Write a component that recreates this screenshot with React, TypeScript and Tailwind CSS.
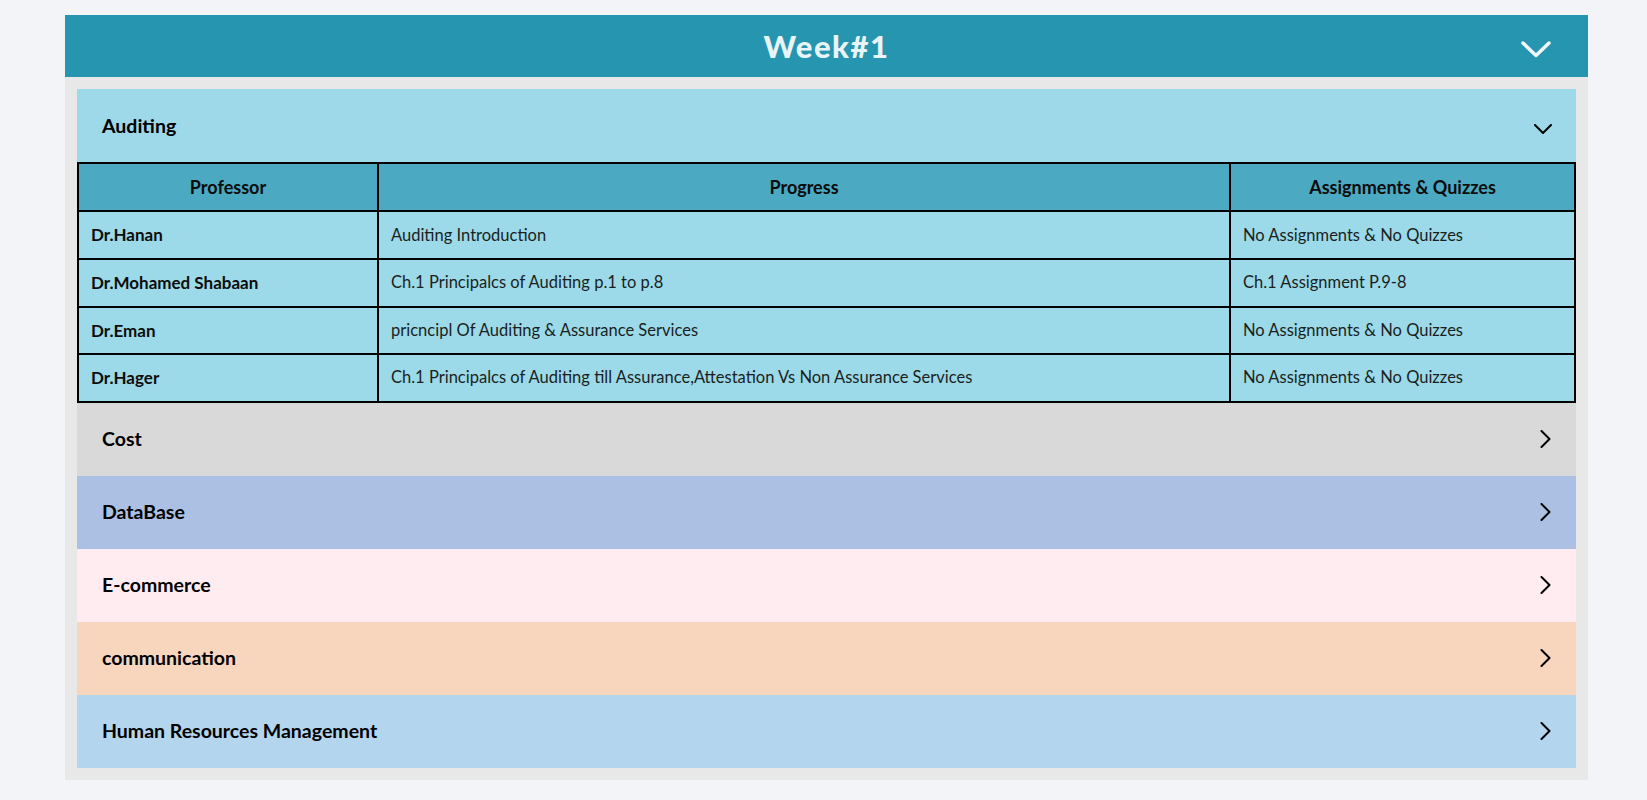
import React from "react";

const rows = [
  { prof: "Dr.Hanan", progress: "Auditing Introduction", tasks: "No Assignments & No Quizzes" },
  { prof: "Dr.Mohamed Shabaan", progress: "Ch.1 Principalcs of Auditing p.1 to p.8", tasks: "Ch.1 Assignment P.9-8" },
  { prof: "Dr.Eman", progress: "pricncipl Of Auditing & Assurance Services", tasks: "No Assignments & No Quizzes" },
  {
    prof: "Dr.Hager",
    progress: "Ch.1 Principalcs of Auditing till Assurance,Attestation Vs Non Assurance Services",
    tasks: "No Assignments & No Quizzes",
  },
];

const subjects = [
  { name: "Cost", bg: "bg-[#d9d9d9]" },
  { name: "DataBase", bg: "bg-[#abc0e3]" },
  { name: "E-commerce", bg: "bg-[#feecf1]" },
  { name: "communication", bg: "bg-[#f8d5bd]" },
  { name: "Human Resources Management", bg: "bg-[#b3d5ed]" },
];

function ChevronDown({ className }: { className?: string }) {
  return (
    <svg className={className} viewBox="0 0 18 10" fill="none">
      <path d="M1 1 L9 9 L17 1" stroke="currentColor" strokeWidth="2" strokeLinecap="round" strokeLinejoin="round" />
    </svg>
  );
}

function ChevronRight({ className }: { className?: string }) {
  return (
    <svg className={className} viewBox="0 0 11 18" fill="none">
      <path d="M1.5 1 L9.5 9 L1.5 17" stroke="currentColor" strokeWidth="2" strokeLinecap="round" strokeLinejoin="round" />
    </svg>
  );
}

export default function App() {
  return (
    <div className="min-h-screen bg-[#f3f4f8] pt-[15px] font-['Lato','Open_Sans',sans-serif]">
      <div className="ml-[65px] w-[1523px] bg-[#e8e8e8]">
        <div className="grid h-[62px] grid-cols-[1fr_auto_1fr] items-center bg-[#2595b0]">
          <div />
          <h1 className="text-[31px] font-black tracking-[1.5px] text-[#e8f4f7]">Week#1</h1>
          <div className="flex justify-end pr-[37px]">
            <svg className="mt-[7px] h-[17px] w-[30px] text-[#f2f8fa]" viewBox="0 0 30 17" fill="none">
              <path d="M2 2 L15 14.5 L28 2" stroke="currentColor" strokeWidth="3.5" strokeLinecap="round" strokeLinejoin="round" />
            </svg>
          </div>
        </div>

        <div className="p-[12px]">
          <div className="bg-[#9ed9e9]">
            <div className="flex h-[73px] items-center justify-between pl-[25px] pr-[24px]">
              <span className="text-[19.5px] font-bold text-black">Auditing</span>
              <ChevronDown className="mt-[6px] h-[10px] w-[18px] text-black" />
            </div>
            <table className="w-full table-fixed border-collapse border-2 border-black text-left">
              <colgroup>
                <col className="w-[300px]" />
                <col className="w-[852px]" />
                <col />
              </colgroup>
              <thead>
                <tr className="h-[48px] bg-[#4ba9c2]">
                  <th className="border-2 border-black text-center text-[18px] font-bold text-[#0d0d0d]">Professor</th>
                  <th className="border-2 border-black text-center text-[18px] font-bold text-[#0d0d0d]">Progress</th>
                  <th className="border-2 border-black text-center text-[18px] font-bold text-[#0d0d0d]">Assignments &amp; Quizzes</th>
                </tr>
              </thead>
              <tbody>
                {rows.map((r, i) => (
                  <tr key={r.prof} className={`${i === 0 ? "h-[48px]" : "h-[47.5px]"} bg-[#9cdae9]`}>
                    <td className="border-2 border-black pl-[12px] text-[17px] font-bold text-[#0d0d0d]">{r.prof}</td>
                    <td className="border-2 border-black pl-[12px] text-[16.5px] text-[#1a1f1d]">{r.progress}</td>
                    <td className="border-2 border-black pl-[12px] text-[16.5px] text-[#1a1f1d]">{r.tasks}</td>
                  </tr>
                ))}
              </tbody>
            </table>
          </div>

          {subjects.map((s) => (
            <div key={s.name} className={`flex h-[73px] items-center justify-between pl-[25px] pr-[25px] ${s.bg}`}>
              <span className="text-[19.5px] font-bold text-black">{s.name}</span>
              <ChevronRight className="h-[18px] w-[11px] text-black" />
            </div>
          ))}
        </div>
      </div>
    </div>
  );
}
